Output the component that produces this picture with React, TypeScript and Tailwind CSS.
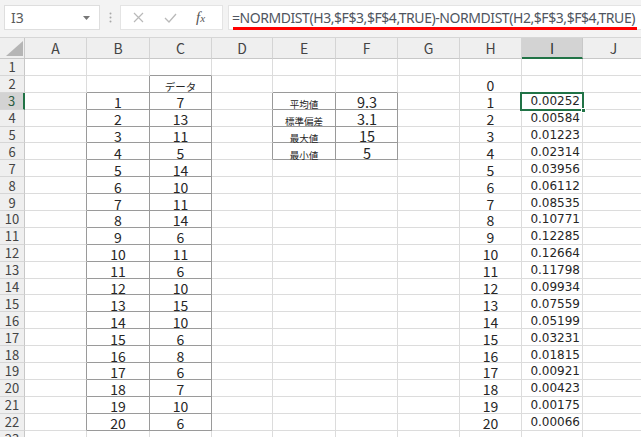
import React from "react";

const cols = ["A", "B", "C", "D", "E", "F", "G", "H", "I", "J", "K"];
const widths = [62, 63, 62, 61, 63, 62, 62, 62, 61, 62, 62];
const rows = Array.from({ length: 23 }, (_, i) => i + 1);

const cData = [7, 13, 11, 5, 14, 10, 11, 14, 6, 11, 6, 10, 15, 10, 6, 8, 6, 7, 10, 6];
const iData = [
  "0.00252", "0.00584", "0.01223", "0.02314", "0.03956", "0.06112", "0.08535",
  "0.10771", "0.12285", "0.12664", "0.11798", "0.09934", "0.07559", "0.05199",
  "0.03231", "0.01815", "0.00921", "0.00423", "0.00175", "0.00066",
];
const eLabels = ["平均値", "標準偏差", "最大値", "最小値"];
const fVals = ["9.3", "3.1", "15", "5"];

function bordered(ci: number, r: number) {
  const c = cols[ci];
  if (!c) return false;
  if ((c === "B" || c === "C") && r >= 3 && r <= 22) return true;
  if (c === "C" && r === 2) return true;
  if ((c === "E" || c === "F") && r >= 3 && r <= 6) return true;
  return false;
}

function cellContent(c: string, r: number): React.ReactNode {
  if (c === "B" && r >= 3 && r <= 22)
    return <span className="text-[14px] leading-none">{r - 2}</span>;
  if (c === "C" && r === 2) return <span className="text-[10.5px] leading-none">データ</span>;
  if (c === "C" && r >= 3 && r <= 22)
    return <span className="text-[14px] leading-none">{cData[r - 3]}</span>;
  if (c === "E" && r >= 3 && r <= 6)
    return <span className="text-[9.5px] leading-none">{eLabels[r - 3]}</span>;
  if (c === "F" && r >= 3 && r <= 6)
    return <span className="text-[14.5px] leading-none pl-[1px]">{fVals[r - 3]}</span>;
  if (c === "H" && r >= 2 && r <= 22)
    return <span className="text-[14px] leading-none">{r - 2}</span>;
  return null;
}

function Cell({ ci, r }: { ci: number; r: number }) {
  const c = cols[ci];
  const rightDark = bordered(ci, r) || bordered(ci + 1, r);
  const bottomDark = bordered(ci, r) || bordered(ci, r + 1);
  const isI = c === "I" && r >= 3 && r <= 22;
  const content = isI ? null : cellContent(c, r);
  return (
    <div
      className={
        "shrink-0 h-full border-r border-b flex items-center " +
        (rightDark ? "border-r-[#9a9a9a] " : "border-r-[#dcdcdc] ") +
        (bottomDark ? "border-b-[#9a9a9a] " : "border-b-[#dcdcdc] ") +
        (isI ? "justify-end pr-[2px]" : "justify-center")
      }
      style={{ width: widths[ci] }}
    >
      {isI ? (
        <span className="font-['DejaVu_Sans',sans-serif] text-[12px] leading-none text-[#262626] pt-[1px]">
          {iData[r - 3]}
        </span>
      ) : content ? (
        <span className="text-[#262626] leading-none pt-[1px]">{content}</span>
      ) : null}
    </div>
  );
}

export default function App() {
  return (
    <div className="w-[641px] h-[437px] overflow-hidden bg-white font-['Noto_Sans_CJK_JP','Noto_Sans',sans-serif]">
      {/* Formula bar */}
      <div className="h-[37px] bg-[#f3f3f3] flex items-start pt-[5px]">
        <div className="ml-[4px] w-[96px] h-[25px] bg-white border border-[#dedede] flex items-center justify-between pl-[6px] pr-[9px]">
          <span className="text-[14px] text-[#5a5a5a] font-['Noto_Sans',sans-serif] leading-none">I3</span>
          <svg width="7" height="4" viewBox="0 0 7 4">
            <path d="M0 0 L7 0 L3.5 4 Z" fill="#777" />
          </svg>
        </div>
        <div className="w-[20px] h-[25px] flex items-center justify-center">
          <svg width="3" height="11" viewBox="0 0 3 11">
            <circle cx="1.5" cy="1.5" r="1" fill="#a8a8a8" />
            <circle cx="1.5" cy="5.5" r="1" fill="#a8a8a8" />
            <circle cx="1.5" cy="9.5" r="1" fill="#a8a8a8" />
          </svg>
        </div>
        <div className="w-[103px] h-[25px] bg-white border border-[#e4e4e4] flex items-center">
          <div className="w-[32px] flex justify-center ml-[1px]">
            <svg width="11" height="11" viewBox="0 0 11 11">
              <path d="M1 1 L10 10 M10 1 L1 10" stroke="#b9b9b9" strokeWidth="1.2" fill="none" />
            </svg>
          </div>
          <div className="w-[32px] flex justify-center">
            <svg width="13" height="10" viewBox="0 0 13 10">
              <path d="M1 5 L5 9 L12 1" stroke="#b9b9b9" strokeWidth="1.3" fill="none" />
            </svg>
          </div>
          <div className="flex-1 flex justify-center pr-[7px]">
            <span className="font-['Liberation_Serif',serif] italic text-[15px] text-[#555] leading-none">
              f<span className="text-[11px]">x</span>
            </span>
          </div>
        </div>
        <div className="ml-[5px] flex-1 h-[25px] bg-white border border-[#e4e4e4] border-r-0 relative flex items-center pl-[3px]">
          <span className="text-[14px] text-[#4f5560] font-['Noto_Sans',sans-serif] leading-none whitespace-nowrap tracking-[-0.44px]">
            =NORMDIST(H3,$F$3,$F$4,TRUE)-NORMDIST(H2,$F$3,$F$4,TRUE)
          </span>
          <div className="absolute left-[4px] right-[4px] top-[21px] h-[3px] bg-[#ff0000]" />
        </div>
      </div>

      {/* Column headers */}
      <div className="h-[22px] flex bg-[#efefef] border-t border-[#d6d6d6]">
        <div className="w-[25px] shrink-0 h-full border-r border-b border-[#c8c8c8] relative">
          <svg className="absolute right-[1px] bottom-[2px]" width="17" height="15" viewBox="0 0 17 15">
            <path d="M17 0 L17 15 L0 15 Z" fill="#b5b5b5" />
          </svg>
        </div>
        {cols.map((c, ci) => (
          <div
            key={c}
            className={
              "shrink-0 h-full border-r flex items-center justify-center text-[14px] leading-none " +
              (c === "I"
                ? "bg-[#d3d3d3] border-r-[#c8c8c8] border-b-2 border-b-[#217346] text-[#2d2d2d]"
                : "border-r-[#d4d4d4] border-b border-b-[#c8c8c8] text-[#444]")
            }
            style={{ width: widths[ci] }}
          >
            {c}
          </div>
        ))}
      </div>

      {/* Rows */}
      <div className="relative">
        {rows.map((r) => (
          <div key={r} className="h-[16.9px] flex">
            <div
              className={
                "w-[25px] shrink-0 h-full border-b border-b-[#d6d6d6] flex items-center justify-center text-[13px] leading-none " +
                (r === 3
                  ? "bg-[#d3d3d3] border-r-2 border-r-[#217346] text-[#2b5c40]"
                  : "bg-[#efefef] border-r border-r-[#c8c8c8] text-[#444]")
              }
            >
              {r}
            </div>
            {cols.map((c, ci) => (
              <Cell key={c} ci={ci} r={r} />
            ))}
          </div>
        ))}
        {/* Selected cell I3 */}
        <div className="absolute left-[520px] top-[32.8px] w-[64px] h-[19px] border-2 border-[#217346] pointer-events-none" />
        <div className="absolute left-[581px] top-[48.5px] w-[5px] h-[5px] bg-[#217346] border border-white" />
      </div>
    </div>
  );
}
